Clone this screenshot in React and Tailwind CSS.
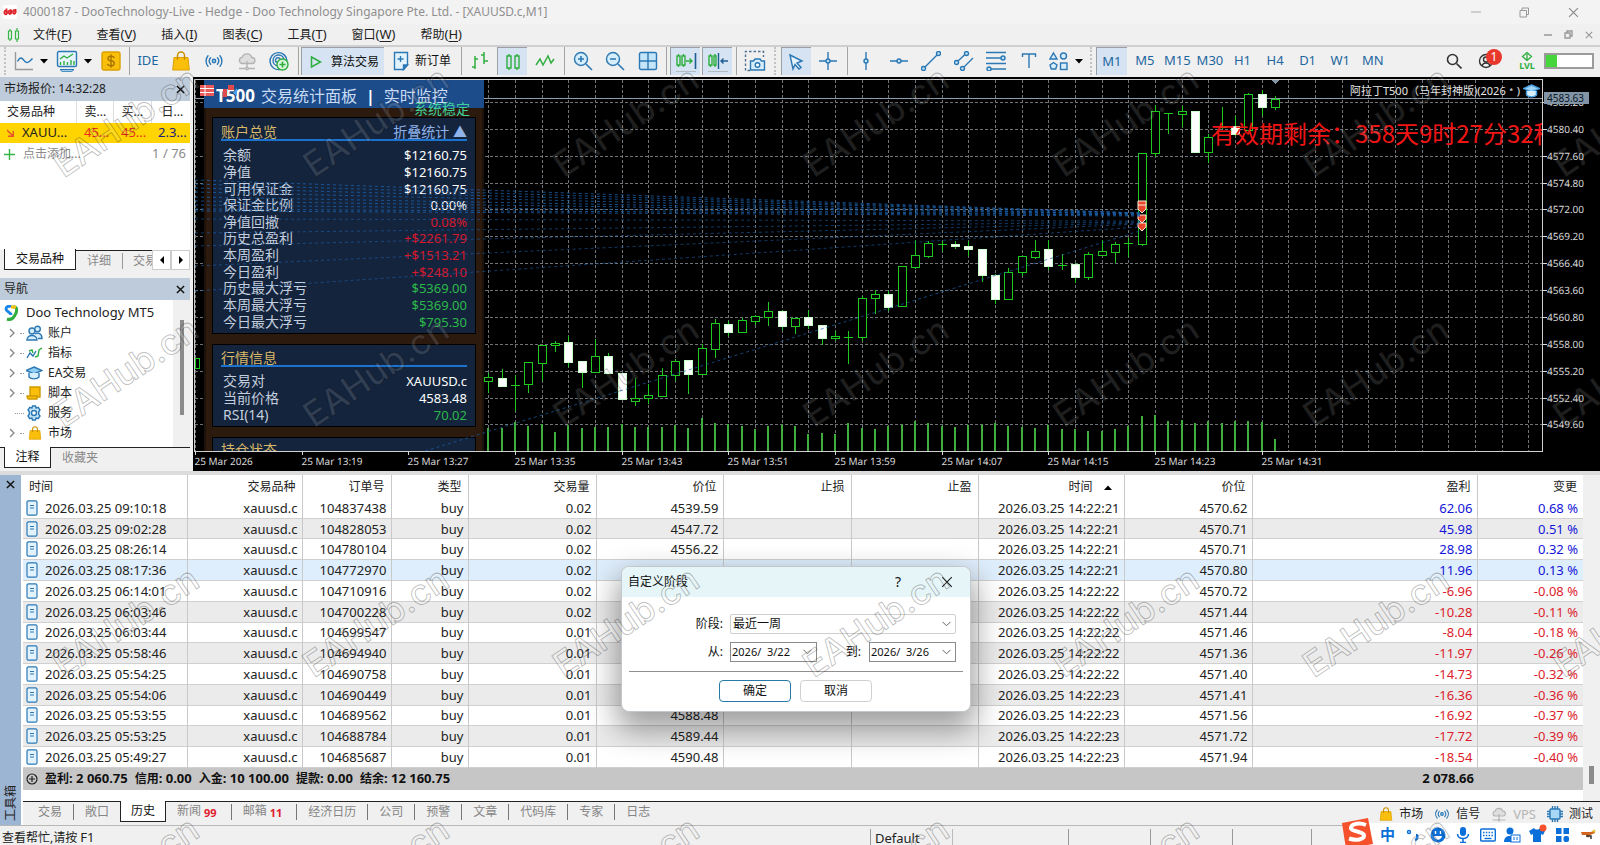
import React from "react";

/* ---------- shared toolbar pieces ---------- */

const B = "#2b78b4";
const G = "#2fae3f";

function Ico({ children, w = 24, h = 24, className = "" }) {
  return (
    <svg width={w} height={h} viewBox={`0 0 ${w} ${h}`} fill="none" strokeWidth="1.4" className={`shrink-0 ${className}`} aria-hidden="true">
      {children}
    </svg>
  );
}

function Tool({ label, className = "w-8", active, children }) {
  return (
    <div className={`flex h-7 shrink-0 justify-center ${className}`}>
      <button
        aria-label={label}
        className={`flex h-full items-center justify-center ${active ? "w-[30px] border-t border-l border-[#9aa0a6] bg-[#d5e3f2]" : "w-full"}`}
      >
        {children}
      </button>
    </div>
  );
}

const Sep = ({ className = "w-[6px]" }) => (
  <div className={`flex h-7 shrink-0 justify-center ${className}`}>
    <div className="w-px bg-[#a3a3a3]" />
  </div>
);

const Dots = ({ className = "w-2" }) => (
  <div className={`flex h-7 shrink-0 justify-center ${className}`}>
    <div className="border-l-2 border-dotted border-[#c2c2c2]" />
  </div>
);

const Caret = ({ className = "" }) => (
  <svg width="8" height="5" viewBox="0 0 8 5" className={`shrink-0 ${className}`} aria-hidden="true">
    <path d="M0 0h8L4 4.6z" fill="#000" />
  </svg>
);

const Bag = ({ s = 20 }) => (
  <svg width={s} height={s} viewBox="0 0 20 20" fill="none" aria-hidden="true" className="shrink-0">
    <path d="M6.500 7V4.500a3.500 3.500 0 0 1 7 0V7" stroke="#c98f00" strokeWidth="1.500" />
    <path d="M3 6.500h14l1.300 12.500H1.700z" fill="#f9bf0b" stroke="#dca000" />
    <path d="M6.500 8.500v-2M13.500 8.500v-2" stroke="#b57d00" strokeWidth="1.300" />
  </svg>
);

const Signal = ({ s = 20 }) => (
  <svg width={s} height={s} viewBox="0 0 20 20" fill="none" stroke={B} strokeWidth="1.4" aria-hidden="true" className="shrink-0">
    <circle cx="10" cy="10" r="1.700" fill="#a8d8f5" />
    <path d="M6.600 13.200a4.800 4.800 0 0 1 0-6.400M13.400 13.200a4.800 4.800 0 0 0 0-6.400M4 15.200a8 8 0 0 1 0-10.400M16 15.200a8 8 0 0 0 0-10.400" strokeLinecap="round" />
  </svg>
);

const Cloud = ({ s = 20 }) => (
  <svg width={s} height={s} viewBox="0 0 20 20" fill="none" stroke="#b4b4b4" strokeWidth="1.400" aria-hidden="true" className="shrink-0">
    <path d="M5 12.500a3.200 3.200 0 0 1 .2-6.300 5 5 0 0 1 9.500.3 3 3 0 0 1 .5 6z" fill="#dedede" />
    <path d="M10 10v7M2 17.500h6M12 17.500h6" />
    <circle cx="10" cy="17.500" r="1.300" fill="#eee" />
  </svg>
);

const XIcon = ({ s = 9, c = "#111", w = 1.600 }) => (
  <svg width={s} height={s} viewBox="0 0 10 10" aria-hidden="true" className="shrink-0">
    <path d="M1 1l8 8M9 1L1 9" stroke={c} strokeWidth={w} />
  </svg>
);

/* ---------- title, menu, toolbar ---------- */

function TitleBar() {
  return (
    <div className="flex h-6 items-center bg-[#f3f3f3] pl-[3px] text-xs text-[#8f8f8f]">
      <svg width="14" height="14" viewBox="0 0 14 14" aria-hidden="true" className="mr-[6px]">
        <rect width="14" height="14" rx="2" fill="#fff" />
        <g fill="none" stroke="#e0202a" strokeWidth="1.800">
          <path d="M3.500 3.500v5M8 4.500v4M12.500 4v4" />
          <ellipse cx="2.700" cy="7.500" rx="1.300" ry="1.800" />
          <ellipse cx="7" cy="7.200" rx="1.200" ry="1.800" />
          <ellipse cx="11.200" cy="7" rx="1.200" ry="1.800" />
        </g>
      </svg>
      <span className="grow whitespace-nowrap">4000187 - DooTechnology-Live - Hedge - Doo Technology Singapore Pte. Ltd. - [XAUUSD.c,M1]</span>
      <button aria-label="最小化" className="flex w-12 justify-center"><Ico w={10} h={10}><path d="M0 5h10" stroke="#aaa" strokeWidth="1" /></Ico></button>
      <button aria-label="还原" className="flex w-12 justify-center"><Ico w={11} h={11}><path d="M1 3.500h6.500v6.500H1zM3 3V1h6.500v6.500H8" stroke="#999" strokeWidth="1" /></Ico></button>
      <button aria-label="关闭" className="mr-[2px] flex w-[50px] justify-center"><XIcon s={11} c="#888" w={1} /></button>
    </div>
  );
}

const MENUS = [
  ["文件", "F"], ["查看", "V"], ["插入", "I"], ["图表", "C"], ["工具", "T"], ["窗口", "W"], ["帮助", "H"],
];

function MenuBar() {
  return (
    <div className="flex h-[23px] items-center border-b-2 border-[#cfcfcf] bg-[#f0f0f0] pl-[7px] text-xs text-[#222]">
      <Ico w={14} h={14} className="mr-[12px]">
        <path d="M1.500 3h3v8h-3zM8.500 3h3v8h-3zM3 1v2M3 11v2M10 0v3M10 11v3" stroke="#35b548" strokeWidth="1.200" />
      </Ico>
      <nav className="flex grow gap-[25px]">
        {MENUS.map(([t, k]) => (
          <button key={k} className="whitespace-nowrap">
            {t}<span className="text-[13px]">(<u className="underline-offset-2">{k}</u>)</span>
          </button>
        ))}
      </nav>
      <div className="flex items-center gap-3 pr-[7px]">
        <button aria-label="最小化图表"><Ico w={8} h={8}><path d="M0 4h8" stroke="#999" strokeWidth="1.500" /></Ico></button>
        <button aria-label="还原图表"><Ico w={9} h={9}><path d="M1 3h5v5H1zM3 3V1h5v5H6" stroke="#999" /></Ico></button>
        <button aria-label="关闭图表"><XIcon s={8} c="#999" w={1.500} /></button>
      </div>
    </div>
  );
}

function Toolbar() {
  return (
    <div className="flex h-[30px] items-start overflow-hidden bg-[#f0f0f0] text-[13px] text-[#1d669f]">
      <Dots className="w-[10px]" />
      <Tool label="图表类型" className="w-[42px]">
        <Ico w={20} h={20}><path d="M1.500 1v17.500H19" stroke="#999" /><path d="M3.500 10.500c3-6 5-3 7-.5s4 2 8-2.500" stroke={B} /></Ico>
        <Caret className="ml-[6px]" />
      </Tool>
      <Tool label="指标" className="w-[43px]">
        <Ico w={22} h={22}>
          <rect x="1.500" y="1.500" width="19" height="15" rx="1.500" fill="#e6f4fd" stroke={B} />
          <path d="M4 9l4-3 3 2 6-4" stroke={G} />
          <path d="M4.500 15v-3M8 15v-4M11.500 15v-3M15 15v-5M18 15v-4" stroke={G} />
          <path d="M4 19.500h14l-2 1.800H6z" fill="#bfe2f7" stroke={B} strokeWidth="1" />
        </Ico>
        <Caret className="ml-[6px]" />
      </Tool>
      <Tool label="报价">
        <Ico w={20} h={20}><rect x="1" y="1" width="18" height="18" rx="2" fill="#f9bf0b" stroke="#dba000" /><path d="M13.500 6.800c-.8-1.200-2-1.500-3.500-1.500-4 0-4 4.200 0 4.500 4.300.3 4.300 5 0 5-1.800 0-3-.5-3.800-1.700M10 3.300v13.400" stroke="#a87400" /></Ico>
      </Tool>
      <Sep className="w-[5px]" />
      <Tool label="编辑器"><span>IDE</span></Tool>
      <Tool label="市场" className="w-[33px]"><Bag /></Tool>
      <Tool label="信号" className="w-[33px]"><Signal /></Tool>
      <Tool label="VPS" className="w-[33px]"><Cloud /></Tool>
      <Tool label="社区">
        <Ico w={22} h={22}>
          <path d="M12 19.500A8.500 8.500 0 1 1 19 11" stroke={B} /><path d="M10 16a5.500 5.500 0 1 1 6-6" stroke={B} /><path d="M9 12.500a2.500 2.500 0 1 1 3.500-2.500" stroke={B} />
          <circle cx="14.500" cy="14.500" r="5.500" fill="#d9f5dc" stroke={G} /><path d="M14.500 11.500v6M11.500 14.500h6" stroke={G} strokeWidth="1.600" />
        </Ico>
      </Tool>
      <Sep />
      <button className="flex h-7 w-[83px] shrink-0 items-center border-t border-l border-[#9aa0a6] bg-[#d5e3f2] pl-2 text-xs whitespace-nowrap text-[#111]">
        <Ico w={12} h={12} className="mr-[9px]"><path d="M1.500 1l9 5-9 5z" stroke={G} strokeWidth="1.500" /></Ico>
        算法交易
      </button>
      <button className="flex h-7 w-[74px] shrink-0 items-center pl-[9px] text-xs whitespace-nowrap text-[#111]">
        <Ico w={16} h={20} className="mr-[6px]"><path d="M1.500 1.500h13V14l-4 4.500h-9z" fill="#e3f3fd" stroke={B} /><path d="M14.500 14h-4v4.500z" fill={B} stroke={B} /><path d="M7.500 5v6M4.500 8h6" stroke={B} /></Ico>
        新订单
      </button>
      <Sep />
      <Tool label="柱形图"><Ico w={20} h={20}><path d="M5 5v13M5 8h3M2 16h3M14 1v12M14 4h-3M14 10h4" stroke={G} strokeWidth="1.500" /></Ico></Tool>
      <Tool label="蜡烛图" active><Ico w={18} h={20}><path d="M3 4h4v12H3zM11 4h4v12h-4zM5 2v2M5 16v2M13 2v2M13 16v2" stroke={G} strokeWidth="1.400" /></Ico></Tool>
      <Tool label="折线图" className="w-[33px]"><Ico w={20} h={20}><path d="M1 14l4-6 3 6 5-9 3 7 3-4" stroke={G} strokeWidth="1.500" /></Ico></Tool>
      <Sep />
      <Tool label="放大" className="w-[31px]"><Ico w={20} h={20}><circle cx="8" cy="8" r="6.500" fill="#d6edfb" stroke={B} /><path d="M13 13l6 6M8 5v6M5 8h6" stroke={B} strokeWidth="1.600" /></Ico></Tool>
      <Tool label="缩小" className="w-[33px]"><Ico w={20} h={20}><circle cx="8" cy="8" r="6.500" fill="#d6edfb" stroke={B} /><path d="M13 13l6 6M5 8h6" stroke={B} strokeWidth="1.600" /></Ico></Tool>
      <Tool label="平铺窗口" className="w-[33px]"><Ico w={20} h={20}><rect x="1.500" y="1.500" width="17" height="17" rx="1.500" fill="#c3e4f9" stroke={B} /><path d="M10 1.500v17M1.500 10h17" stroke={B} /></Ico></Tool>
      <Sep className="w-[5px]" />
      <Tool label="自动滚动" active><Ico w={22} h={22}><path d="M2 5h3v9H2zM7 5h3v9H7zM3.500 3v2M3.500 14v2M8.500 3v2M8.500 14v2M11 10h6M14.500 7.500L17 10l-2.500 2.500" stroke={G} /><path d="M20.500 2v16" stroke="#1d5d94" strokeWidth="1.600" /><path d="M1 20.500h20" stroke="#b3bcc5" strokeWidth="1" /></Ico></Tool>
      <Tool label="图表平移" active><Ico w={22} h={22}><path d="M2 5h3v9H2zM7 5h2v9H7zM3.500 3v2M3.500 14v2M8 3v2M8 14v2" stroke={G} /><path d="M11.500 2v16M14 10h7M16.500 7.500L14 10l2.500 2.500" stroke="#1d5d94" /><path d="M1 20.500h20" stroke="#b3bcc5" strokeWidth="1" /></Ico></Tool>
      <Sep />
      <Tool label="截图"><Ico w={22} h={22}><path d="M6 20.500H1.500v-19h18V7" stroke="#50718f" strokeDasharray="2.500 2" /><path d="M6.500 11h3l1.500-2h5l1.500 2h3v9h-14z" fill="#d6edfb" stroke={B} /><circle cx="13.500" cy="15" r="2.300" fill="#fff" stroke={B} /></Ico></Tool>
      <Dots />
      <Tool label="光标" className="w-[33px]" active><Ico w={18} h={18}><path d="M3 2l12 6-5 2 4 4.500-2 1.500-4-4.500-2 4.500z" fill="#e8f4fd" stroke={B} /></Ico></Tool>
      <Tool label="十字准线"><Ico w={20} h={20}><path d="M10 1v7M10 12v7M1 10h7M12 10h7" stroke={B} /><circle cx="10" cy="10" r="2" stroke={B} fill="#bfe2f7" /></Ico></Tool>
      <Sep />
      <Tool label="垂直线"><Ico w={20} h={20}><path d="M10 1v7M10 12v7" stroke={B} /><circle cx="10" cy="10" r="2" stroke={B} fill="#bfe2f7" /></Ico></Tool>
      <Tool label="水平线" className="w-[33px]"><Ico w={20} h={20}><path d="M1 10h7M12 10h7" stroke={B} /><circle cx="10" cy="10" r="2" stroke={B} fill="#bfe2f7" /></Ico></Tool>
      <Tool label="趋势线"><Ico w={20} h={20}><path d="M3.500 16.500l13-13" stroke={B} /><circle cx="2.500" cy="17.500" r="2" stroke={B} fill="#bfe2f7" /><circle cx="17.500" cy="2.500" r="2" stroke={B} fill="#bfe2f7" /></Ico></Tool>
      <Tool label="等距通道" className="w-[33px]"><Ico w={20} h={20}><path d="M3.500 10.500l8-7.500M9.500 16.500L19 7" stroke={B} /><circle cx="2.500" cy="11.500" r="2" stroke={B} fill="#bfe2f7" /><circle cx="12.500" cy="2.500" r="2" stroke={B} fill="#bfe2f7" /><circle cx="8.500" cy="17.500" r="2" stroke={B} fill="#bfe2f7" /></Ico></Tool>
      <Tool label="斐波纳契"><Ico w={20} h={20}><path d="M0 1.500h20M0 7h15M0 12.500h20M5 18h15" stroke={B} /><circle cx="17" cy="7" r="2" stroke={B} fill="#bfe2f7" /><circle cx="3" cy="18" r="2" stroke={B} fill="#bfe2f7" /></Ico></Tool>
      <Tool label="文本" className="w-[33px]"><Ico w={16} h={18}><path d="M1.500 5V2h13v3M8 2v14" stroke={B} /></Ico></Tool>
      <Tool label="图形" className="w-[41px]">
        <Ico w={20} h={20}><path d="M4.500 2L8 8H1z" stroke={B} fill="#d6edfb" /><circle cx="14.500" cy="5" r="3" stroke={B} fill="#d6edfb" /><path d="M4.500 11.500l3.500 2.500-1.300 4H2.300L1 14z" stroke={B} fill="#d6edfb" /><rect x="11.500" y="12" width="6.500" height="6.500" stroke={B} fill="#d6edfb" /></Ico>
        <Caret className="ml-[6px]" />
      </Tool>
      <Dots className="w-[10px]" />
      <div className="grid w-[293px] shrink-0 grid-cols-9">
        {["M1", "M5", "M15", "M30", "H1", "H4", "D1", "W1", "MN"].map((t, i) => (
          <button key={t} className={`h-7 ${i === 0 ? "mr-[2px] border-t border-l border-[#9aa0a6] bg-[#d5e3f2]" : ""}`}>{t}</button>
        ))}
      </div>
      <div className="ml-auto flex h-7 shrink-0 items-center pr-[6px]">
        <button aria-label="搜索" className="mr-4"><Ico w={16} h={16}><circle cx="6.500" cy="6.500" r="5" stroke="#333" strokeWidth="1.600" /><path d="M10.500 10.500l5 5" stroke="#333" strokeWidth="1.600" /></Ico></button>
        <button aria-label="账户通知" className="relative mr-[14px] w-[26px]">
          <Ico w={16} h={16}><circle cx="8" cy="8" r="6.500" stroke="#333" /><circle cx="8" cy="6.500" r="2.500" stroke="#333" /><path d="M4 13c1-4 7-4 8 0" stroke="#333" /></Ico>
          <span className="absolute -top-[4px] left-[8px] flex size-4 items-center justify-center rounded-full bg-[#e8382c] text-[12px] text-white">1</span>
        </button>
        <div className="mr-2 flex w-[18px] flex-col items-center text-[9px] leading-[9px] font-bold text-[#2fae3f]">
          <Ico w={12} h={9}><path d="M6 .5L10.500 4.500 6 8.500 1.500 4.500zM6 2v6" stroke={G} strokeWidth="1.300" /></Ico>
          LVL
        </div>
        <div className="h-4 w-[50px] border-2 border-[#9b9b9b] bg-white"><div className="h-full w-[11px] bg-[#46d63c]" /></div>
      </div>
    </div>
  );
}

/* ---------- left side ---------- */

function PanelHead({ children, className }) {
  return (
    <div className={`flex items-center justify-between bg-[#bdcbda] pr-[5px] pl-1 text-xs text-[#222] ${className}`}>
      {children}
      <button aria-label="关闭面板"><XIcon s={9} /></button>
    </div>
  );
}

function MarketWatch() {
  return (
    <section className="flex h-[201px] flex-col bg-[#f0f0f0]">
      <PanelHead className="h-6"><span>市场报价: 14:32:28</span></PanelHead>
      <div className="flex min-h-0 grow flex-col bg-white">
        <table className="w-full table-fixed text-xs">
          <colgroup><col className="w-[76px]" /><col className="w-[37px]" /><col className="w-[38px]" /><col /></colgroup>
          <thead>
            <tr className="h-[22px] text-left text-[#222]">
              <th className="border-r border-[#ddd] pl-[7px] font-normal">交易品种</th>
              <th className="border-r border-[#ddd] pl-2 font-normal">卖...</th>
              <th className="border-r border-[#ddd] pl-2 font-normal">买...</th>
              <th className="pl-[10px] font-normal">日...</th>
            </tr>
          </thead>
          <tbody>
            <tr className="h-5 bg-[#ffd400] text-[13px]">
              <td className="pl-[7px] text-[#222]">
                <span className="flex items-center gap-2"><Ico w={7} h={8}><path d="M0 1l6 6M6.300 2v5.300H1" stroke="#e8502a" /></Ico>XAUU...</span>
              </td>
              <td className="pl-2 text-[#e8301a]">45...</td>
              <td className="pl-2 text-[#e8301a]">45...</td>
              <td className="pl-[7px] text-[#20207a]">2.3...</td>
            </tr>
          </tbody>
        </table>
        <div className="flex h-[22px] items-center pr-1 pl-1 text-xs text-[#8a8a8a]">
          <Ico w={11} h={11} className="mr-[8px]"><path d="M5.500 0v11M0 5.500h11" stroke="#35b548" /></Ico>
          点击添加...
          <span className="ml-auto text-[13px]">1 / 76</span>
        </div>
      </div>
      <div className="flex h-7 items-start pl-1 text-xs text-[#8a8a8a]">
        <button className="-mt-px h-[21px] w-[72px] shrink-0 border border-t-0 border-[#222] bg-white text-[#111]">交易品种</button>
        <div className="flex h-5 min-w-0 grow items-center overflow-hidden border-t border-[#222] whitespace-nowrap">
          <button className="px-[11px]">详细</button>
          <span className="h-4 w-px shrink-0 bg-[#999]" />
          <button className="pl-[10px]">交易</button>
        </div>
        {["M5 0v8L1 4z", "M1 0v8l4-4z"].map((d, i) => (
          <button key={d} aria-label={i ? "向右" : "向左"} className="flex h-5 w-[19px] shrink-0 items-center justify-center border border-[#ccc] bg-white">
            <svg width="6" height="8" viewBox="0 0 6 8"><path d={d} fill="#000" /></svg>
          </button>
        ))}
      </div>
    </section>
  );
}

const TREE = [
  ["账户", <g key="a" stroke={B} fill="#d6edfb"><circle cx="6" cy="6" r="3" /><path d="M1 15c0-6 10-6 10 0z" /><circle cx="11.500" cy="4" r="2.800" /><path d="M9 9c3-2 7-.5 7 4.500h-4" /></g>],
  ["指标", <g key="b"><path d="M1 13l3-5 3 3 3-5" stroke={B} /><path d="M9 12l3-1 1-6 3-2M3 6l3-1 1 3" stroke={G} /></g>],
  ["EA交易", <g key="c" stroke={B} fill="#8fcdf3"><path d="M8 2l8 3.500L8 9 0 5.500z" /><path d="M3 8v4c2 2.500 8 2.500 10 0V8" fill="#d6edfb" /></g>],
  ["脚本", <g key="d" stroke="#d09a00" fill="#f9bf0b"><path d="M4 2h10v10H4z" /><path d="M1 11h10v3H3c-1.500 0-2-1.500-2-3z" /></g>],
  ["服务", <g key="e" stroke={B} fill="#c3e4f9"><path d="M6.500 1h3l.6 2.100 2.100-.7 1.800 2.600-1.300 1.700v2.600l1.300 1.700-1.800 2.600-2.100-.7-.6 2.100h-3l-.6-2.100-2.100.7L2 11l1.300-1.700V6.700L2 5l1.800-2.600 2.100.7z" /><circle cx="8" cy="8" r="2.500" fill="#fff" /></g>],
  ["市场", null],
];

function Navigator() {
  return (
    <section className="flex h-[193px] flex-col bg-[#f0f0f0]">
      <PanelHead className="h-[22px]"><span>导航</span></PanelHead>
      <div className="flex min-h-0 grow bg-white">
        <div className="min-w-0 grow pt-[3px] text-[#222]">
          <div className="flex h-5 items-center gap-2 pl-1 text-[13px] whitespace-nowrap">
            <Ico w={14} h={16}>
              <path d="M2 4a3 3 0 0 1 5-2M2 4c0 3 5 3 5 6" stroke="#1b86e8" strokeWidth="3" /><path d="M9 2c5-1 4 5 2 8-2 4-5 5-8 4" stroke="#2fae3f" strokeWidth="3" /><path d="M7 2l5 0" stroke="#f9bf0b" strokeWidth="3" />
            </Ico>
            Doo Technology MT5
          </div>
          <ul className="text-xs">
            {TREE.map(([t, g], i) => (
              <li key={t} className="flex h-5 items-center pl-[9px]">
                {i === 4 ? <span className="w-[6px]" /> : <Ico w={6} h={10}><path d="M1 1l4 4-4 4" stroke="#888" /></Ico>}
                <span className={`mr-[2px] border-t border-dotted border-[#999] ${i === 4 ? "w-[9px]" : "ml-[5px] w-1"}`} />
                <span className="flex w-[17px] justify-center">{g ? <Ico w={17} h={16}>{g}</Ico> : <Bag s={14} />}</span>
                <span className="ml-[5px]">{t}</span>
              </li>
            ))}
          </ul>
        </div>
        <div className="flex w-[17px] shrink-0 justify-center bg-[#f0f0f0] pt-5"><div className="h-[95px] w-1 bg-[#8b8b8b]" /></div>
      </div>
      <div className="flex h-6 items-start border-t border-[#222] pl-1 text-xs text-[#8a8a8a]">
        <button className="-mt-px h-[21px] w-[47px] border border-t-0 border-[#222] bg-white text-[#111]">注释</button>
        <button className="h-5 px-[11px]">收藏夹</button>
      </div>
    </section>
  );
}

/* ---------- chart ---------- */

// [wick top, wick bottom, body top, body bottom, kind]; units are thirds of a pixel below y=220; kind: h hollow, w filled, x doji
const CANDLES = [
  [455,515,472,482,"h"],[445,497,475,497,"w"],[462,570,495,495,"x"],[427,515,427,491,"h"],[372,480,376,428,"h"],[360,392,370,376,"h"],
  [345,437,367,425,"w"],[420,500,424,455,"w"],[355,455,409,455,"h"],[397,460,409,460,"w"],[455,537,460,537,"w"],[472,555,535,542,"h"],
  [488,548,526,535,"h"],[440,528,466,528,"h"],[415,480,424,466,"h"],[420,520,421,463,"w"],[370,463,385,463,"h"],[293,410,310,386,"h"],
  [300,345,312,335,"w"],[290,337,301,335,"h"],[283,312,289,302,"h"],[243,315,272,292,"h"],[268,328,272,317,"w"],[290,338,295,317,"h"],
  [268,325,292,315,"w"],[312,372,315,355,"w"],[330,360,349,355,"h"],[330,430,350,350,"x"],[225,360,235,350,"h"],[207,280,223,235,"h"],
  [210,270,223,260,"w"],[139,257,139,257,"h"],[58,145,106,140,"h"],[60,112,70,107,"h"],[60,90,71,71,"x"],[60,85,73,79,"w"],
  [60,106,79,86,"w"],[87,182,87,164,"w"],[160,248,166,236,"w"],[140,236,157,236,"h"],[105,165,109,157,"h"],[57,115,92,110,"h"],
  [57,148,87,137,"w"],[100,148,135,135,"x"],[125,185,132,171,"w"],[93,177,103,171,"h"],[57,105,94,104,"h"],[62,125,73,95,"h"],
  [50,108,70,70,"x"],[-200,75,-200,71,"h"],[-347,-193,-326,-202,"h"],[-320,-260,-320,-320,"x"],[-345,-282,-328,-319,"h"],[-328,-205,-328,-205,"w"],
  [-260,-173,-248,-205,"h"],[-342,-275,-280,-280,"x"],[-315,-255,-282,-257,"w"],[-383,-270,-377,-270,"h"],[-393,-315,-377,-338,"w"],[-375,-333,-364,-338,"h"],
];

const VOLUMES = [
  620,622,603,615,609,633,612,620,617,617,609,617,618,619,612,620,591,606,609,615,623,615,612,615,639,636,640,606,620,624,
  615,612,601,606,614,617,612,612,606,615,618,620,612,623,625,631,631,624,615,585,583,600,598,606,601,606,600,600,602,655,
];

const PRICES = ["4583.20","4580.40","4577.60","4574.80","4572.00","4569.20","4566.40","4563.60","4560.80","4558.00","4555.20","4552.40","4549.60"];
const TIMES = ["2026","13:19","13:27","13:35","13:43","13:51","13:59","14:07","14:15","14:23","14:31"];

const px = (v) => Math.round(220 + v / 3) + 0.5;
const bx = (i) => Math.round(195 + (i * 40) / 3) + 0.5;
const gy = (i) => Math.round(102 + i * 26.87) + 0.5;

const TRADES = [
  [180, 213], [184, 213], [188, 213], [192, 214], [197, 214], [201, 214], [205, 215], [209, 215], [211, 216],
  [219, 221], [233, 222], [246, 223], [266, 224], [291, 227],
];

function Chart() {
  return (
    <div className="relative min-w-0 grow overflow-hidden bg-black">
      <svg viewBox="193 77 1407 394" preserveAspectRatio="xMinYMin slice" className="h-full w-full" fontFamily="Noto Sans" fontSize="10" shapeRendering="crispEdges">
        <g stroke="#6f7478" strokeDasharray="3 2">
          {PRICES.map((p, i) => <path key={p} d={`M195 ${gy(i)}H1542`} />)}
          {Array.from({ length: 51 }, (_, i) => <path key={i} d={`M${bx(i * 2)} 80V451`} />)}
        </g>
        <path d="M195 98.500H1542" stroke="#8d9cab" />
        <path d="M194.500 451V79.500H1542.500V451.500H194" stroke="#d0d0d0" fill="none" />
        {VOLUMES.map((v, i) => <path key={i} d={`M${bx(22 + i) - 0.5} ${px(v)}V451`} stroke="#3fae3f" strokeWidth="2" />)}
        <rect x="195.500" y="358.500" width="4" height="10" fill="#000" stroke="#18c818" />
        {CANDLES.map(([wt, wb, t, b, k], i) => {
          const x = bx(22 + i);
          return (
            <g key={i} stroke="#1fc91f">
              <path d={`M${x} ${px(wt)}V${px(wb)}`} />
              {k === "x"
                ? <path d={`M${x - 4.5} ${px(t)}H${x + 4.5}`} />
                : <rect x={x - 4} y={px(t)} width="8" height={px(b) - px(t)} fill={k === "w" ? "#fff" : "#000"} stroke={k === "w" ? "#c8ffc8" : "#1fc91f"} />}
            </g>
          );
        })}
        <path d="M1271 80h9l-4.500 4z" fill="#8294a6" />
        {[201, 205, 215, 223].map((y) => (
          <path key={y} d={`M1138 ${y}h8v4l-4 4-4-4z`} fill="#e8472a" stroke="#ffe9dd" shapeRendering="auto" />
        ))}
        <g fill="#d8d8d8" textRendering="geometricPrecision">
          {PRICES.map((p, i) => (
            <g key={p}><path d={`M1542 ${gy(i)}h5`} stroke="#d8d8d8" /><text x="1547" y={gy(i) + 3.5}>{p}</text></g>
          ))}
          {TIMES.map((t, i) => (
            <g key={t}><path d={`M${bx(i * 8)} 451v4`} stroke="#d8d8d8" /><text x={bx(i * 8) - 1} y="464.500">25 Mar {t}</text></g>
          ))}
        </g>
        <rect x="1544" y="92" width="45" height="12" fill="#8294a6" />
        <text x="1547" y="102" fill="#0b1826">4583.63</text>
      </svg>

      <StatsPanel />

      <svg width="40" height="16" viewBox="0 0 40 16" className="absolute top-[6px] left-[6px]" aria-hidden="true">
        <path d="M1 2h14v11H1z" fill="#e85a5a" /><path d="M1 5.500h14M1 9.500h14M6 2v11" stroke="#fff" />
        <path d="M24 6h4v8h-4zM29 2h6v5h-6z" fill="#e04a4a" /><path d="M34 10l4-5v8z" fill="#4aa3e8" />
      </svg>

      <svg viewBox="193 77 1407 394" preserveAspectRatio="xMinYMin slice" className="pointer-events-none absolute inset-0 h-full w-full" fill="none" stroke="#1c5fa8" strokeDasharray="3 3">
        {TRADES.map(([a, b], i) => <path key={i} d={`M195 ${a}L1140 ${b}`} strokeOpacity={i < 9 ? 0.8 : 0.6} />)}
        <path d="M425 451L1140 231" strokeOpacity=".7" />
      </svg>

      <div className="absolute top-[5px] right-[60px] flex items-center gap-[3px] text-[11px] leading-[18px] text-[#e6e6e6]">
        阿拉丁T500（马年封神版)(2026﹡)
        <Ico w={17} h={16}><path d="M8.500 2l8 3.500-8 3.500-8-3.500z" fill="#9ed4f7" stroke="#4a9fe0" /><path d="M3.500 8v4c2 2.500 8 2.500 10 0V8" fill="#d6edfb" stroke="#4a9fe0" /></Ico>
      </div>
      <div className="absolute top-[38px] right-[58px] left-[1018px] overflow-hidden font-['Noto_Sans_CJK_SC'] text-2xl leading-[36px] whitespace-nowrap text-[#f01414]">
        有效期剩余：358天9时27分32秒
      </div>
    </div>
  );
}

const ACCOUNT = [
  ["余额", "$12160.75", "text-white"], ["净值", "$12160.75", "text-white"], ["可用保证金", "$12160.75", "text-white"],
  ["保证金比例", "0.00%", "text-white"], ["净值回撤", "0.08%", "text-[#d8182c]"], ["历史总盈利", "+$2261.79", "text-[#d8182c]"],
  ["本周盈利", "+$1513.21", "text-[#d8182c]"], ["今日盈利", "+$248.10", "text-[#d8182c]"], ["历史最大浮亏", "$5369.00", "text-[#2db84a]"],
  ["本周最大浮亏", "$5369.00", "text-[#2db84a]"], ["今日最大浮亏", "$795.30", "text-[#2db84a]"],
];
const QUOTE = [["交易对", "XAUUSD.c", "text-white"], ["当前价格", "4583.48", "text-white"], ["RSI(14)", "70.02", "text-[#2db84a]"]];

function StatBox({ title, extra, rows, className, listClass }) {
  return (
    <div className={`border border-black bg-[#14243d] px-[8px] ${className}`}>
      <div className="flex h-[18px] items-center justify-between border-b-2 border-[#1b72cf] text-[14px] text-[#d9b867]">
        {title}{extra}
      </div>
      {rows && (
        <dl className={`grid pl-[2px] text-[14px] leading-4 text-[#c3cede] ${listClass}`}>
          {rows.map(([k, v, c]) => (
            <div key={k} className="flex items-center justify-between">
              <dt>{k}</dt><dd className={`text-[13px] ${c}`}>{v}</dd>
            </div>
          ))}
        </dl>
      )}
    </div>
  );
}

function StatsPanel() {
  return (
    <div className="absolute top-[3px] left-[11px] flex h-[371px] w-[280px] flex-col overflow-hidden bg-[#2c1a0f]">
      <div className="relative flex h-7 shrink-0 items-center bg-[#1d4c8b] pt-1 pl-[12px] text-[16px] whitespace-nowrap text-[#c9dcf4]">
        <span className="mr-[6px] text-[17px] font-bold text-white">T500</span>
        <span>交易统计面板</span>
        <b className="mx-[9px] text-white">|</b>
        <span>实时监控</span>
        <span className="absolute top-[19px] right-[14px] text-[14px] leading-5 text-[#3fcf9a]">系统稳定</span>
      </div>
      <div className="flex flex-col gap-[10px] border-x-2 border-[#1d120a] px-[6px] pt-[9px]">
        <StatBox
          title="账户总览"
          extra={<button className="text-[#8fb2ea]">折叠统计 ▲</button>}
          rows={ACCOUNT}
          className="h-[217px] pt-[5px]"
          listClass="mt-[6px] h-[183px]"
        />
        <StatBox title="行情信息" rows={QUOTE} className="h-[83px] pt-[4px]" listClass="mt-[6px] h-[50px]" />
        <StatBox title="持仓状态" className="h-[40px] pt-[3px]" />
      </div>
    </div>
  );
}

/* ---------- toolbox ---------- */

const T1 = "2026.03.25 14:22:21", T2 = "2026.03.25 14:22:22", T3 = "2026.03.25 14:22:23";
const ROWS = [
  ["09:10:18", "104837438", "0.02", "4539.59", T1, "4570.62", "62.06", "0.68 %"],
  ["09:02:28", "104828053", "0.02", "4547.72", T1, "4570.71", "45.98", "0.51 %"],
  ["08:26:14", "104780104", "0.02", "4556.22", T1, "4570.71", "28.98", "0.32 %"],
  ["08:17:36", "104772970", "0.02", "4564.82", T1, "4570.80", "11.96", "0.13 %"],
  ["06:14:01", "104710916", "0.02", "4574.20", T2, "4570.72", "-6.96", "-0.08 %"],
  ["06:03:46", "104700228", "0.02", "4576.58", T2, "4571.44", "-10.28", "-0.11 %"],
  ["06:03:44", "104699547", "0.01", "4579.50", T2, "4571.46", "-8.04", "-0.18 %"],
  ["05:58:46", "104694940", "0.01", "4583.33", T2, "4571.36", "-11.97", "-0.26 %"],
  ["05:54:25", "104690758", "0.01", "4586.13", T2, "4571.40", "-14.73", "-0.32 %"],
  ["05:54:06", "104690449", "0.01", "4587.77", T3, "4571.41", "-16.36", "-0.36 %"],
  ["05:53:55", "104689562", "0.01", "4588.48", T3, "4571.56", "-16.92", "-0.37 %"],
  ["05:53:25", "104688784", "0.01", "4589.44", T3, "4571.72", "-17.72", "-0.39 %"],
  ["05:49:27", "104685687", "0.01", "4590.48", T3, "4571.94", "-18.54", "-0.40 %"],
];

const HEAD = ["交易品种", "订单号", "类型", "交易量", "价位", "止损", "止盈", "时间", "价位", "盈利", "变更"];
const TABS = [["交易"], ["敞口"], ["历史"], ["新闻", "99"], ["邮箱", "11"], ["经济日历"], ["公司"], ["预警"], ["文章"], ["代码库"], ["专家"], ["日志"]];
const TOTALS = [["盈利", "2 060.75"], ["信用", "0.00"], ["入金", "10 100.00"], ["提款", "0.00"], ["结余", "12 160.75"]];

function Toolbox() {
  const cell = "border-r border-[#c9c9c9] pr-1";
  return (
    <section className="flex h-[351px] border-b border-[#b8b8b8] bg-white">
      <div className="flex w-[21px] shrink-0 flex-col items-center justify-between bg-[#9bb5d3] pt-[5px] pb-1 text-xs text-[#222]">
        <button aria-label="关闭工具箱"><XIcon s={9} /></button>
        <span className="[writing-mode:sideways-lr]">工具箱</span>
      </div>
      <div className="flex min-w-0 grow flex-col pl-[2px]">
        <div className="flex h-[326px]">
          <div className="min-w-0 grow">
            <table className="h-[293px] w-full table-fixed text-right text-[13px] leading-[18px] whitespace-nowrap text-[#222]">
              <colgroup>
                <col className="w-[164px]" /><col className="w-[115px]" /><col className="w-[89px]" /><col className="w-[77px]" /><col className="w-[128px]" /><col className="w-[127px]" />
                <col className="w-[128px]" /><col className="w-[127px]" /><col className="w-[146px]" /><col className="w-[128px]" /><col className="w-[225px]" /><col />
              </colgroup>
              <thead>
                <tr className="h-[23px] text-xs">
                  <th className="border-r border-[#c9c9c9] pl-[6px] text-left font-normal">时间</th>
                  {HEAD.map((h, i) => (
                    <th key={i} className={`font-normal ${i < 10 ? "border-r border-[#c9c9c9]" : ""} ${i === 7 ? "pr-3" : "pr-[6px]"}`}>
                      {h}{i === 7 && <Caret className="ml-[11px] inline-block rotate-180 align-middle" />}
                    </th>
                  ))}
                </tr>
              </thead>
              <tbody>
                {ROWS.map(([t, id, vol, p, ct, cp, pl, ch], i) => {
                  const c = pl[0] === "-" ? "text-[#dc1c2c]" : "text-[#1414d8]";
                  return (
                    <tr key={id} className={`border-b border-[#d0d0d0] ${i === 3 ? "bg-[#dfeefc]" : i % 2 ? "bg-[#ebebeb]" : "bg-white"}`}>
                      <td className="border-r border-[#c9c9c9] pl-[3px]">
                        <span className="flex items-center gap-[7px]">
                          <Ico w={12} h={16}><rect x="1" y=".8" width="10" height="14.400" rx="1.500" fill="#e3f3fd" stroke={B} strokeWidth="1.200" /><path d="M4 5.500h4M4 8h4" stroke={B} strokeWidth="1" /></Ico>
                          2026.03.25 {t}
                        </span>
                      </td>
                      <td className={cell}>xauusd.c</td>
                      <td className={cell}>{id}</td>
                      <td className={cell}>buy</td>
                      <td className={cell}>{vol}</td>
                      <td className={cell}>{p}</td>
                      <td className={cell} />
                      <td className={cell} />
                      <td className={cell}>{ct}</td>
                      <td className={cell}>{cp}</td>
                      <td className={`${cell} ${c}`}>{pl}</td>
                      <td className={`pr-[5px] ${c}`}>{ch}</td>
                    </tr>
                  );
                })}
              </tbody>
            </table>
            <div className="flex h-[22px] items-center bg-[#c6c6c6] pl-[3px] text-xs font-bold whitespace-nowrap text-[#111]">
              <Ico w={12} h={12} className="mr-[7px]"><circle cx="6" cy="6" r="5" stroke="#222" strokeWidth="1.200" /><path d="M6 3v6M3 6h6" stroke="#222" strokeWidth="1.200" /></Ico>
              {TOTALS.map(([k, v]) => (
                <span key={k} className="mr-[7px]">{k}<span className="text-[13px]">: {v}</span></span>
              ))}
              <span className="mr-[109px] ml-auto text-[13px]">2 078.66</span>
            </div>
          </div>
          <div className="flex w-[17px] shrink-0 flex-col items-center justify-end bg-[#f0f0f0] pb-[17px]"><div className="h-[18px] w-[5px] bg-[#8b8b8b]" /></div>
        </div>
        <div className="flex h-6 items-start border-t border-[#222] bg-[#f0f0f0] pl-1 text-xs whitespace-nowrap text-[#858585]">
          {TABS.map(([t, n], i) =>
            i === 2 ? (
              <button key={t} className="-mt-px h-[21px] border border-t-0 border-[#222] bg-white px-[10px] text-[#111]">{t}</button>
            ) : (
              <div key={t} className="flex h-5 items-center">
                <button className="flex px-[11px] leading-5">
                  {t}{n && <b className="mt-[2px] ml-[3px] pr-[3px] text-[11px] text-[#e0202e]">{n}</b>}
                </button>
                {i !== 1 && i !== 11 && <span className="h-4 w-px bg-[#777]" />}
              </div>
            )
          )}
          <div className="ml-auto flex items-center gap-[6px] pt-[3px] pr-[7px] leading-[18px] text-[#222]">
            <Bag s={14} /><span>市场</span>
            <span className="ml-[5px]"><Signal s={16} /></span><span>信号</span>
            <span className="ml-[5px]"><Cloud s={16} /></span><span className="text-[13px] text-[#b5b5b5]">VPS</span>
            <span className="ml-[5px]">
              <Ico w={16} h={16}><rect x="3" y="3" width="10" height="10" rx="1" fill="#a8d8f8" stroke={B} /><path d="M5.500 0v3M8 0v3M10.500 0v3M5.500 13v3M8 13v3M10.500 13v3M0 5.500h3M0 8h3M0 10.500h3M13 5.500h3M13 8h3M13 10.500h3" stroke={B} /></Ico>
            </span>
            <span>测试</span>
          </div>
        </div>
      </div>
    </section>
  );
}

/* ---------- status bar and input method bar ---------- */

function StatusBar() {
  return (
    <footer className="flex h-[19px] items-end overflow-hidden bg-[#f0f0f0] text-xs whitespace-nowrap text-[#222]">
      <span className="w-[870px] shrink-0 pl-[2px] leading-[14px]">查看帮忙,请按 <span className="text-[13px]">F1</span></span>
      <span className="h-4 w-[82px] shrink-0 border-l border-[#999] pl-1 text-[13px] leading-[18px]">Default</span>
      <span className="h-4 w-[116px] shrink-0 border-l border-[#bbb]" />
      <span className="h-4 w-[82px] shrink-0 border-l border-[#999]" />
      <span className="h-4 w-[82px] shrink-0 border-l border-[#999]" />
      <span className="h-4 w-[79px] shrink-0 border-l border-[#999]" />
      <span className="h-4 grow border-l border-[#999]" />
    </footer>
  );
}

const U = "#0a6fd8";

const IME = [
  ["标点", <Ico key="p" w={16} h={18}><circle cx="4" cy="7" r="1.500" stroke={U} /><path d="M11 10c2 0 2 4-1 5" stroke={U} strokeWidth="2.500" /></Ico>],
  ["表情", <Ico key="e" w={16} h={18}><circle cx="8" cy="10" r="7.500" fill={U} /><path d="M4 11c1 5 7 5 8 0z" fill="#fff" /><path d="M5.500 6v3M10.500 6v3" stroke="#fff" /></Ico>],
  ["语音", <Ico key="v" w={16} h={18}><rect x="5" y="2" width="6" height="9" rx="3" fill={U} /><path d="M2.500 9c0 6 11 6 11 0M8 14v3M5 17.500h6" stroke={U} strokeWidth="1.600" /></Ico>],
  ["键盘", <Ico key="k" w={16} h={18}><rect x=".7" y="4" width="14.600" height="12" rx="1" stroke={U} /><path d="M3 7.500h10M3 10.500h10" stroke={U} strokeDasharray="1.500 1.300" strokeWidth="1.600" /><path d="M4.500 13.500h7" stroke={U} /></Ico>],
  ["账号", <Ico key="a" w={17} h={18}><circle cx="6" cy="6" r="3.500" fill={U} /><path d="M0 17c0-8 10-8 12 0z" fill={U} /><rect x="7" y="10" width="9" height="7" fill="#fff" stroke={U} strokeWidth="1" /><path d="M10 12v3M13 12v3" stroke={U} strokeWidth="1" /></Ico>],
  ["皮肤", <Ico key="s" w={18} h={20}><path d="M5 4c1 2 5 2 6 0l5 3-2 4-2-1v8H4v-8l-2 1-2-4z" fill={U} /><circle cx="14" cy="4" r="3.500" fill="#f4512c" /></Ico>],
  ["工具", <Ico key="t" w={15} h={18}><path d="M1 3h5.500v6H1zM8.500 3H14v6H8.500zM1 11h5.500v6H1z" fill={U} /><rect x="8.500" y="11" width="5.500" height="6" rx="2" fill={U} /></Ico>],
  ["主题", <Ico key="m" w={16} h={18}><path d="M1 7h10l4-2v3l-5 2-2 3-2-3H2z" fill="#d2641e" /><path d="M6 11h5v3" stroke="#333" strokeWidth="1.500" /><circle cx="14" cy="6" r="1.500" fill="#e8c23a" /></Ico>],
];

function ImeBar() {
  return (
    <div className="absolute right-0 bottom-0 flex h-[27px] items-end">
      <div className="flex h-[22px] items-center rounded-tl bg-white pl-[30px]">
        <button className="w-[25px] text-center text-[15px] leading-4 font-bold text-[#0a6fd8]">中</button>
        {IME.map(([label, icon]) => (
          <button key={label} aria-label={label} className="flex w-[25px] justify-center">{icon}</button>
        ))}
      </div>
      <Ico w={33} h={27} className="absolute top-0 -left-[4px]">
        <path d="M1 5L27 0l5 26-27 5z" fill="#f4512c" />
        <path d="M25 7c-6-2.500-14-1.500-15 2.500-1 4.500 13 3.500 13 8 0 4-8 5.500-15 3" stroke="#fff" strokeWidth="4" />
      </Ico>
    </div>
  );
}

/* ---------- dialog ---------- */

function DateField({ id, value }) {
  return (
    <span className="relative flex h-5 w-[87px] items-center border border-[#8a8a8a] bg-white">
      <input id={id} defaultValue={value} className="w-full bg-transparent pl-[1px] text-[11px] whitespace-pre outline-none" />
      <svg width="9" height="6" viewBox="0 0 9 6" fill="none" className="mr-1 shrink-0" aria-hidden="true"><path d="M.5.800l4 4 4-4" stroke="#666" /></svg>
    </span>
  );
}

function PeriodDialog() {
  return (
    <div role="dialog" aria-labelledby="dlg" className="absolute top-[566px] left-[621px] h-[146px] w-[350px] rounded-lg border border-[#c2c8cc] bg-white text-xs text-[#111] shadow-[0_14px_30px_4px_rgba(0,0,0,0.38)]">
      <div className="flex h-[30px] items-center rounded-t-lg bg-[#e5f5f8] pl-[6px]">
        <h2 id="dlg" className="grow">自定义阶段</h2>
        <button aria-label="帮助" className="w-10 text-sm">?</button>
        <button aria-label="关闭" className="flex w-[52px] justify-center pl-[6px]"><XIcon s={12} c="#222" w={1} /></button>
      </div>
      <div className="flex flex-col gap-2 pt-[17px]">
        <div className="flex h-5 items-center">
          <label htmlFor="period" className="w-[101px] text-right">阶段:</label>
          <span className="relative ml-[7px] flex h-5 w-[226px] items-center rounded-[2px] border border-[#cfcfcf]">
            <select id="period" className="w-full appearance-none bg-transparent pl-[2px] outline-none"><option>最近一周</option></select>
            <svg width="9" height="6" viewBox="0 0 9 6" fill="none" className="absolute right-1" aria-hidden="true"><path d="M.5.800l4 4 4-4" stroke="#666" /></svg>
          </span>
        </div>
        <div className="flex h-5 items-center">
          <label htmlFor="from" className="mr-[7px] w-[101px] text-right">从:</label>
          <DateField id="from" value="2026/  3/22" />
          <label htmlFor="to" className="mr-[8px] w-[44px] text-right">到:</label>
          <DateField id="to" value="2026/  3/26" />
        </div>
      </div>
      <div className="mx-[7px] mt-[9px] border-t border-[#8f8f8f]" />
      <div className="mt-2 flex gap-[9px] pl-[97px]">
        <button className="h-[22px] w-[72px] rounded-[4px] border border-[#2878a8]">确定</button>
        <button className="h-[22px] w-[72px] rounded-[4px] border border-[#d0d0d0]">取消</button>
      </div>
    </div>
  );
}

/* ---------- watermark ---------- */

function Watermark() {
  const marks = [];
  for (let r = 0; r < 4; r++) for (let c = 0; c < 7; c++) marks.push([126 + c * 250, 122 + r * 250]);
  return (
    <svg className="pointer-events-none absolute inset-0 h-full w-full" fontFamily="Inter" fontSize="35" fontWeight="500" textAnchor="middle" fill="#fff" fillOpacity=".13" stroke="#000" strokeOpacity=".26" strokeWidth="1" aria-hidden="true">
      {marks.map(([x, y]) => (
        <text key={`${x}-${y}`} transform={`translate(${x} ${y}) rotate(-34)`} y="12">EAHub.cn</text>
      ))}
    </svg>
  );
}

export default function App() {
  return (
    <div className="relative flex min-h-screen flex-col overflow-hidden bg-[#f0f0f0] font-['Noto_Sans','Noto_Sans_CJK_SC',sans-serif]">
      <TitleBar />
      <MenuBar />
      <Toolbar />
      <main className="flex h-[394px] gap-[3px]">
        <div className="w-[190px] shrink-0">
          <MarketWatch />
          <Navigator />
        </div>
        <Chart />
      </main>
      <div className="h-1 bg-[#dcdcdc]" />
      <Toolbox />
      <StatusBar />
      <PeriodDialog />
      <ImeBar />
      <Watermark />
    </div>
  );
}
